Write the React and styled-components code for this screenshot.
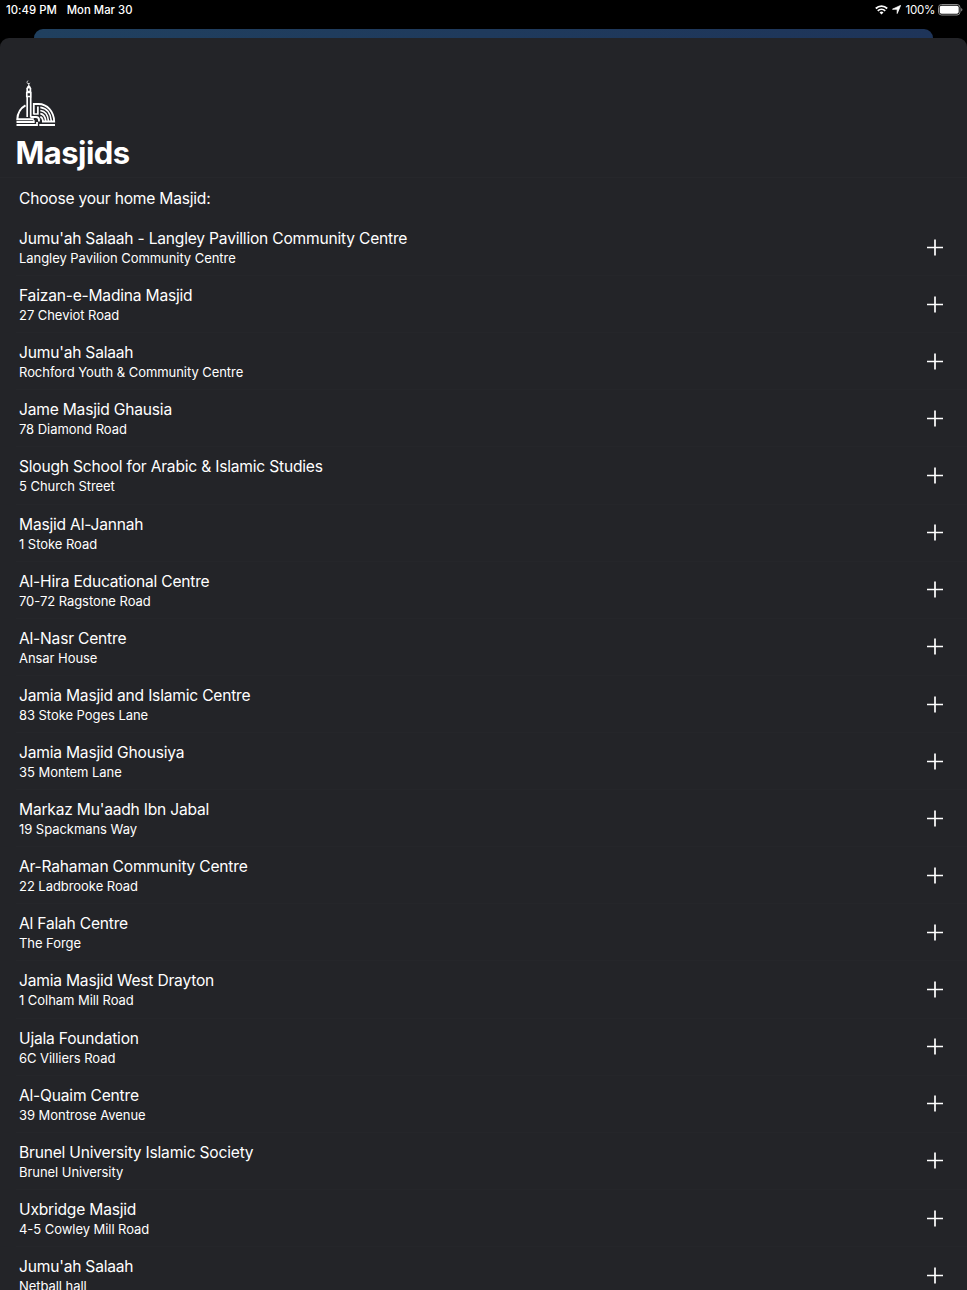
import styled, { createGlobalStyle } from 'styled-components'

const masjids = [
    { name: "Jumu'ah Salaah - Langley Pavillion Community Centre", address: 'Langley Pavilion Community Centre' },
    { name: 'Faizan-e-Madina Masjid', address: '27 Cheviot Road' },
    { name: "Jumu'ah Salaah", address: 'Rochford Youth & Community Centre' },
    { name: 'Jame Masjid Ghausia', address: '78 Diamond Road' },
    { name: 'Slough School for Arabic & Islamic Studies', address: '5 Church Street' },
    { name: 'Masjid Al-Jannah', address: '1 Stoke Road' },
    { name: 'Al-Hira Educational Centre', address: '70-72 Ragstone Road' },
    { name: 'Al-Nasr Centre', address: 'Ansar House' },
    { name: 'Jamia Masjid and Islamic Centre', address: '83 Stoke Poges Lane' },
    { name: 'Jamia Masjid Ghousiya', address: '35 Montem Lane' },
    { name: "Markaz Mu'aadh Ibn Jabal", address: '19 Spackmans Way' },
    { name: 'Ar-Rahaman Community Centre', address: '22 Ladbrooke Road' },
    { name: 'Al Falah Centre', address: 'The Forge' },
    { name: 'Jamia Masjid West Drayton', address: '1 Colham Mill Road' },
    { name: 'Ujala Foundation', address: '6C Villiers Road' },
    { name: 'Al-Quaim Centre', address: '39 Montrose Avenue' },
    { name: 'Brunel University Islamic Society', address: 'Brunel University' },
    { name: 'Uxbridge Masjid', address: '4-5 Cowley Mill Road' },
    { name: "Jumu'ah Salaah", address: 'Netball hall' },
]

const Logo = () => (
    <LogoSvg viewBox="0 0 40 48" fill="none" stroke="#fff">
        <path d="M12.300 .8a1.500 1.500 0 1 0 1.600 2" strokeWidth=".7" />
        <path d="M12.800 3v3" strokeWidth=".9" />
        <path d="M10.400 8.500q0-2 2.400-3.500 2.400 1.500 2.400 3.500z" fill="#fff" stroke="none" />
        <path d="M11.200 8v3.500h3.200V8M10.800 12.500v4h4v-4z" strokeWidth="1.700" />
        <path d="M11.200 17v20M14.700 17v20.500" strokeWidth="1.700" />
        <path d="M9.500 25.300C4.600 28 1.600 33 1.300 39.300h16.500" strokeWidth="2" />
        <path d="M14.700 37h5.300q3 0 3 3v1.400" strokeWidth="1.900" />
        <path d="M.5 42h17.300v-1.700M.5 45h20.500v-3M23.300 45h15.700" strokeWidth="1.800" />
        <path d="M17.800 34.500V24H22.500C31.500 24 37.900 32 38.200 41.500H26" strokeWidth="1.800" />
        <path d="M17.800 34h4.100V26.500" strokeWidth="1.700" />
        <path d="M24.300 27.300C30.800 28 34.800 33.500 35.300 41M24.300 30.500c4.800.6 7.700 4.700 8.200 10.500M24.300 33.700c3.200.5 5 3.300 5.400 7.300M24.300 36.800c1.700.4 2.400 2 2.700 4.200" strokeWidth="1.700" />
    </LogoSvg>
)

const WifiIcon = () => (
    <svg width="13" height="10" viewBox="0 0 13 10" fill="none" stroke="#fff" strokeWidth="1.800">
        <path d="M.8 3.500a8.200 8.200 0 0 1 11.400 0M2.800 5.800a5.300 5.300 0 0 1 7.400 0" />
        <path d="M4.500 7.500a2.900 2.900 0 0 1 4 0l-2 2.100z" fill="#fff" stroke="none" />
    </svg>
)

const LocationIcon = () => (
    <svg width="9" height="9" viewBox="0 0 9 9" fill="#fff">
        <path d="M8.600.4L5.200 8.500V4.200H.5z" stroke="#fff" strokeWidth=".8" strokeLinejoin="round" />
    </svg>
)

const BatteryIcon = () => (
    <svg width="25" height="12" viewBox="0 0 25 12">
        <rect x=".5" y=".5" width="21.500" height="10.500" rx="3" fill="none" stroke="#8b8b8b" />
        <rect x="1.700" y="1.700" width="19" height="8.100" rx="1.800" fill="#fff" />
        <path d="M23.200 4v3.600q1.200-.5 1.200-1.800T23.200 4z" fill="#8b8b8b" />
    </svg>
)

const PlusIcon = () => (
    <svg width="16" height="17" viewBox="0 0 16 17" stroke="#fff" strokeWidth="1.700">
        <path d="M8 .5v16M0 8.500h16" />
    </svg>
)

const Masjid = ({ name, address }) => (
    <Row>
        <Details>
            <Name>{name}</Name>
            <Address>{address}</Address>
        </Details>
        <AddButton aria-label="Add">
            <PlusIcon />
        </AddButton>
    </Row>
)

const App = () => {
    return (
        <Screen>
            <GlobalStyle />
            <StatusBar>
                <StatusText gap="10px">
                    <span>10:49 PM</span>
                    <span>Mon Mar 30</span>
                </StatusText>
                <StatusText gap="4px">
                    <WifiIcon />
                    <LocationIcon />
                    <Percent>100%</Percent>
                    <BatteryIcon />
                </StatusText>
            </StatusBar>
            <BackCard />
            <Sheet>
                <Header>
                    <Logo />
                    <Title>Masjids</Title>
                </Header>
                <Prompt>Choose your home Masjid:</Prompt>
                <List>
                    {masjids.map((masjid, index) => (
                        <Masjid key={index} {...masjid} />
                    ))}
                </List>
            </Sheet>
        </Screen>
    )
}
export default App

const GlobalStyle = createGlobalStyle`
body{
    margin: 0;
    background-color: #000;
    font-family: Inter, "Liberation Sans", sans-serif;
    color: #fff;
    overflow: hidden;
}
*{
    box-sizing: border-box;
}
`
const Screen = styled.div`
display: flex;
flex-direction: column;
height: 1290px;
overflow: hidden;
background-color: #000;
`
const StatusBar = styled.div`
flex: none;
display: flex;
justify-content: space-between;
height: 29px;
padding: 2px 4px 0 6px;
`
const StatusText = styled.div`
display: flex;
align-items: center;
gap: ${({ gap }) => gap};
height: 15px;
font-size: 11.3px;
font-weight: 500;
letter-spacing: 0.03px;
white-space: nowrap;
`
const Percent = styled.span`
margin-right: -1px;
font-size: 11.6px;
font-weight: 400;
letter-spacing: -0.3px;
`
const BackCard = styled.div`
flex: none;
height: 9px;
margin: 0 34px;
border-radius: 9px 9px 0 0;
background: linear-gradient(90deg, #20405f, #1e3459);
`
const Sheet = styled.div`
flex: 1;
min-height: 0;
overflow: hidden;
border-radius: 9px 9px 0 0;
background-color: #232428;
`
const Header = styled.div`
height: 140px;
padding: 42px 16px 0;
border-bottom: 1px solid #26272b;
`
const LogoSvg = styled.svg`
display: block;
width: 40px;
height: 48px;
`
const Title = styled.h1`
margin: 6px 0 0 -0.5px;
font-size: 31px;
line-height: 38px;
font-weight: 700;
letter-spacing: -0.55px;
`
const Prompt = styled.p`
margin: 0;
padding: 10px 19px 0;
height: 41px;
font-size: 15.6px;
line-height: 22px;
letter-spacing: -0.22px;
`
const List = styled.ul`
margin: 0;
padding: 0 0 0 16px;
list-style: none;
`
const Row = styled.li`
display: flex;
justify-content: space-between;
height: 57.12px;
padding: 9px 24px 0 3px;
border-bottom: 1px solid #25262a;
`
const Details = styled.div`
white-space: nowrap;
`
const Name = styled.div`
font-size: 15.6px;
line-height: 22px;
letter-spacing: -0.21px;
`
const Address = styled.div`
font-size: 13px;
line-height: 16px;
letter-spacing: -0.05px;
`
const AddButton = styled.button`
display: flex;
height: 17px;
margin-top: 10.7px;
padding: 0;
border: none;
background: none;
`
